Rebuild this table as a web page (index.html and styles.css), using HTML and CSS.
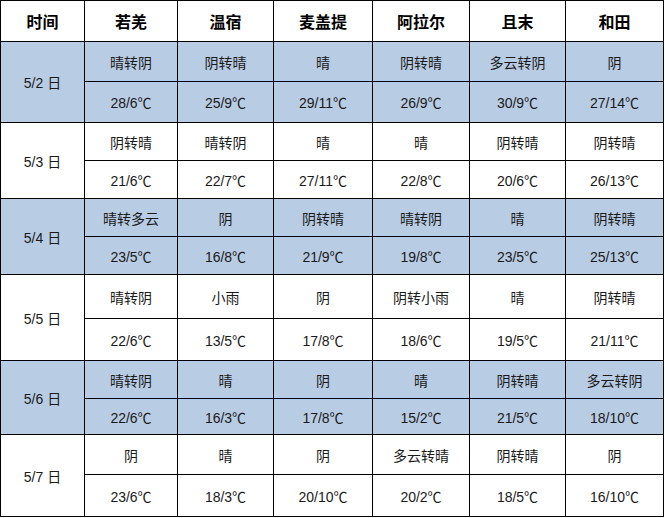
FILE: index.html
```html
<!DOCTYPE html>
<html lang="zh-CN">
<head>
<meta charset="utf-8">
<title>天气预报</title>
<link rel="stylesheet" href="styles.css">
</head>
<body>
<table class="wx">
  <colgroup>
    <col class="c0"><col class="c1"><col class="c2"><col class="c3"><col class="c4"><col class="c5"><col class="c6">
  </colgroup>
  <thead>
    <tr class="h-head">
      <th>时间</th><th>若羌</th><th>温宿</th><th>麦盖提</th><th>阿拉尔</th><th>且末</th><th>和田</th>
    </tr>
  </thead>
  <tbody>
    <tr class="blue h40">
      <td class="date" rowspan="2">5/2 日</td>
      <td>晴转阴</td><td>阴转晴</td><td>晴</td><td>阴转晴</td><td>多云转阴</td><td>阴</td>
    </tr>
    <tr class="blue h41">
      <td>28/6℃</td><td>25/9℃</td><td>29/11℃</td><td>26/9℃</td><td>30/9℃</td><td>27/14℃</td>
    </tr>
    <tr class="h38">
      <td class="date" rowspan="2">5/3 日</td>
      <td>阴转晴</td><td>晴转阴</td><td>晴</td><td>晴</td><td>阴转晴</td><td>阴转晴</td>
    </tr>
    <tr class="h38">
      <td>21/6℃</td><td>22/7℃</td><td>27/11℃</td><td>22/8℃</td><td>20/6℃</td><td>26/13℃</td>
    </tr>
    <tr class="blue h38">
      <td class="date" rowspan="2">5/4 日</td>
      <td>晴转多云</td><td>阴</td><td>阴转晴</td><td>晴转阴</td><td>晴</td><td>阴转晴</td>
    </tr>
    <tr class="blue h38">
      <td>23/5℃</td><td>16/8℃</td><td>21/9℃</td><td>19/8℃</td><td>23/5℃</td><td>25/13℃</td>
    </tr>
    <tr class="h44">
      <td class="date" rowspan="2">5/5 日</td>
      <td>晴转阴</td><td>小雨</td><td>阴</td><td>阴转小雨</td><td>晴</td><td>阴转晴</td>
    </tr>
    <tr class="h42">
      <td>22/6℃</td><td>13/5℃</td><td>17/8℃</td><td>18/6℃</td><td>19/5℃</td><td>21/11℃</td>
    </tr>
    <tr class="blue h38">
      <td class="date" rowspan="2">5/6 日</td>
      <td>晴转阴</td><td>晴</td><td>阴</td><td>晴</td><td>阴转晴</td><td>多云转阴</td>
    </tr>
    <tr class="blue h36">
      <td>22/6℃</td><td>16/3℃</td><td>17/8℃</td><td>15/2℃</td><td>21/5℃</td><td>18/10℃</td>
    </tr>
    <tr class="h40">
      <td class="date" rowspan="2">5/7 日</td>
      <td>阴</td><td>晴</td><td>阴</td><td>多云转晴</td><td>阴转晴</td><td>阴</td>
    </tr>
    <tr class="h42">
      <td>23/6℃</td><td>18/3℃</td><td>20/10℃</td><td>20/2℃</td><td>18/5℃</td><td>16/10℃</td>
    </tr>
  </tbody>
</table>
</body>
</html>
```

FILE: styles.css
```css
html, body {
  margin: 0;
  padding: 0;
  background: #ffffff;
}

.wx {
  border-collapse: collapse;
  table-layout: fixed;
  width: 664px;
  font-family: "Liberation Sans", "Noto Sans CJK SC", sans-serif;
  color: #1a1a1a;
}

.c0 { width: 84px; }
.c1 { width: 93px; }
.c2 { width: 96px; }
.c3 { width: 99px; }
.c4 { width: 97px; }
.c5 { width: 96px; }
.c6 { width: 98px; }

.wx th,
.wx td {
  border: 1px solid #000000;
  padding: 0;
  text-align: center;
  vertical-align: middle;
  white-space: nowrap;
}

.wx th {
  font-size: 16px;
  font-weight: bold;
  color: #000000;
}

.wx td {
  font-size: 14px;
}

.blue td {
  background: #b8cce4;
}

.h-head { height: 41px; }
.h36 { height: 36px; }
.h38 { height: 38px; }
.h40 { height: 40px; }
.h41 { height: 41px; }
.h42 { height: 42px; }
.h44 { height: 44px; }
```
